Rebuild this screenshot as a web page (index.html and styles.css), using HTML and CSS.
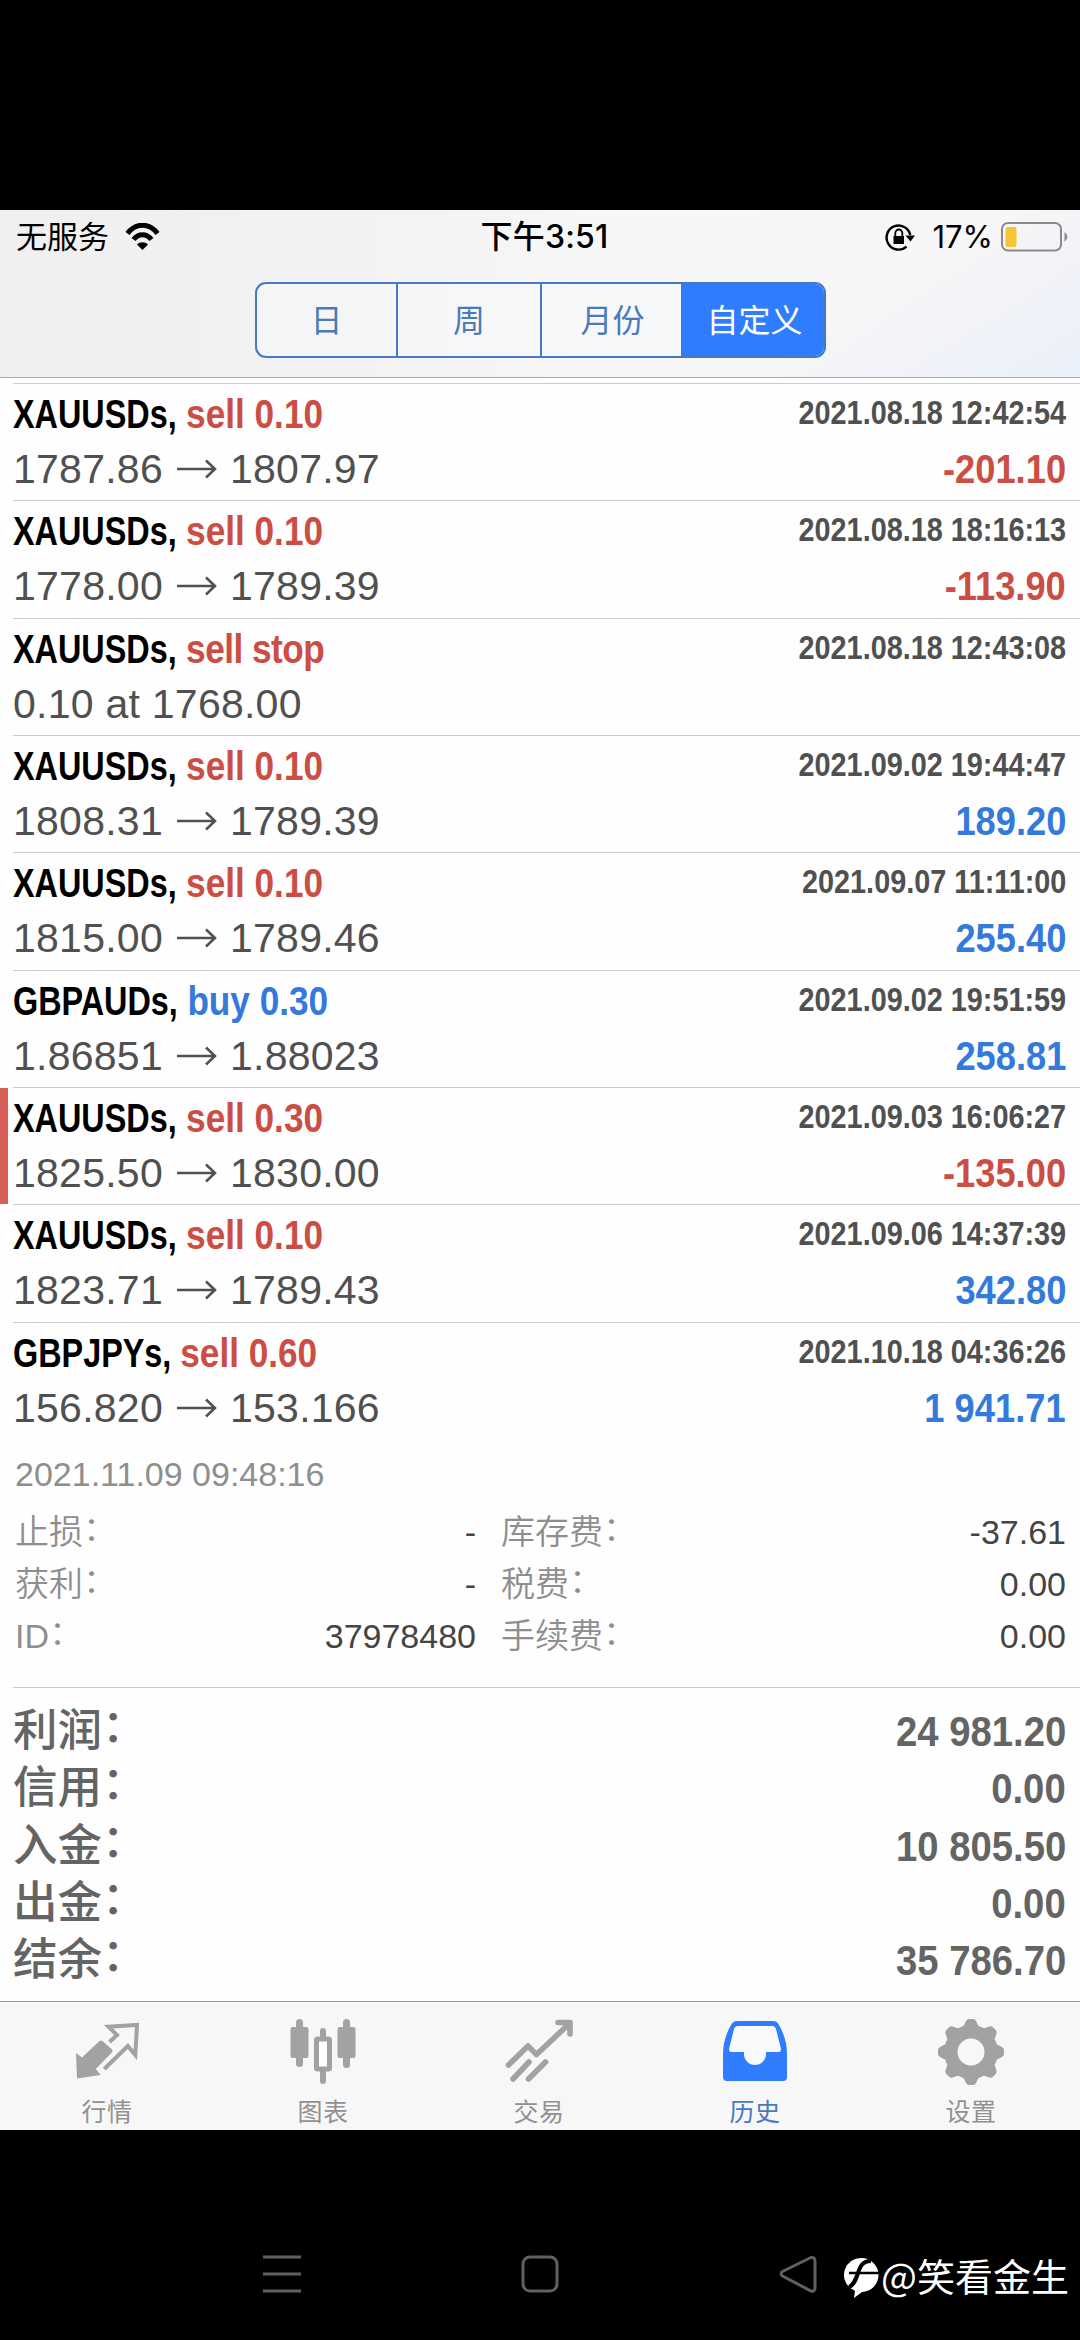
FILE: index.html
```
<!DOCTYPE html>
<html lang="zh-CN">
<head>
<meta charset="utf-8">
<title>历史</title>
<link rel="stylesheet" href="styles.css">
</head>
<body>
<div class="screen">
<header class="header">
  <div class="status">
    <div class="carrier"><span>无服务</span>
      <svg class="wifi" viewBox="0 0 36 28"><path d="M3 10.500C11-.5 25-.5 33 10.500" fill="none" stroke="#000" stroke-width="5"/><path d="M9 16.500C14 10 22 10 27 16.500" fill="none" stroke="#000" stroke-width="5"/><path d="M18 27l-5.500-5.500c3-3 8-3 11 0z"/></svg>
    </div>
    <div class="clock">下午3:51</div>
    <div class="power">
      <svg class="lock" viewBox="0 0 30 28"><path d="M21.500 23.600A12 12 0 1 1 25.300 12" fill="none" stroke="#000" stroke-width="2.400"/><path d="M20.500 12.500h9.500l-4.500 6z"/><rect x="8.500" y="13" width="10.500" height="8"/><path d="M10.300 13v-3a3.500 3.500 0 0 1 7 0v3" fill="none" stroke="#000" stroke-width="1.800"/></svg>
      <span class="percent">17%</span>
      <svg class="battery" viewBox="0 0 68 30"><rect x="1" y="1" width="59" height="27.500" rx="6" fill="none" stroke="#8b898a" stroke-width="2"/><rect x="4.500" y="5" width="11" height="20" rx="2" fill="#f5c535"/><path d="M63.500 10q6 4.500 0 10z" fill="#8b898a"/></svg>
    </div>
  </div>
  <nav class="segments"><span>日</span><span>周</span><span>月份</span><span class="on">自定义</span></nav>
</header>
<main class="list" id="list">
  <section class="deal"><div class="line"><h2><b>XAUUSDs,</b> <i class="sell">sell 0.10</i></h2><time>2021.08.18 12:42:54</time></div><div class="line"><p>1787.86<svg class="arrow" viewBox="0 0 40 20"><path d="M0 10h38M29 1.500l9 8.500-9 8.500"/></svg>1807.97</p><strong class="sell">-201.10</strong></div></section>
  <section class="deal"><div class="line"><h2><b>XAUUSDs,</b> <i class="sell">sell 0.10</i></h2><time>2021.08.18 18:16:13</time></div><div class="line"><p>1778.00<svg class="arrow" viewBox="0 0 40 20"><path d="M0 10h38M29 1.500l9 8.500-9 8.500"/></svg>1789.39</p><strong class="sell">-113.90</strong></div></section>
  <section class="deal"><div class="line"><h2><b>XAUUSDs,</b> <i class="sell stop">sell stop</i></h2><time>2021.08.18 12:43:08</time></div><div class="line"><p>0.10 at 1768.00</p></div></section>
  <section class="deal"><div class="line"><h2><b>XAUUSDs,</b> <i class="sell">sell 0.10</i></h2><time>2021.09.02 19:44:47</time></div><div class="line"><p>1808.31<svg class="arrow" viewBox="0 0 40 20"><path d="M0 10h38M29 1.500l9 8.500-9 8.500"/></svg>1789.39</p><strong class="buy">189.20</strong></div></section>
  <section class="deal"><div class="line"><h2><b>XAUUSDs,</b> <i class="sell">sell 0.10</i></h2><time>2021.09.07 11:11:00</time></div><div class="line"><p>1815.00<svg class="arrow" viewBox="0 0 40 20"><path d="M0 10h38M29 1.500l9 8.500-9 8.500"/></svg>1789.46</p><strong class="buy">255.40</strong></div></section>
  <section class="deal"><div class="line"><h2><b>GBPAUDs,</b> <i class="buy">buy 0.30</i></h2><time>2021.09.02 19:51:59</time></div><div class="line"><p>1.86851<svg class="arrow" viewBox="0 0 40 20"><path d="M0 10h38M29 1.500l9 8.500-9 8.500"/></svg>1.88023</p><strong class="buy">258.81</strong></div></section>
  <section class="deal flagged"><div class="line"><h2><b>XAUUSDs,</b> <i class="sell">sell 0.30</i></h2><time>2021.09.03 16:06:27</time></div><div class="line"><p>1825.50<svg class="arrow" viewBox="0 0 40 20"><path d="M0 10h38M29 1.500l9 8.500-9 8.500"/></svg>1830.00</p><strong class="sell">-135.00</strong></div></section>
  <section class="deal"><div class="line"><h2><b>XAUUSDs,</b> <i class="sell">sell 0.10</i></h2><time>2021.09.06 14:37:39</time></div><div class="line"><p>1823.71<svg class="arrow" viewBox="0 0 40 20"><path d="M0 10h38M29 1.500l9 8.500-9 8.500"/></svg>1789.43</p><strong class="buy">342.80</strong></div></section>
  <section class="deal"><div class="line"><h2><b>GBPJPYs,</b> <i class="sell">sell 0.60</i></h2><time>2021.10.18 04:36:26</time></div><div class="line"><p>156.820<svg class="arrow" viewBox="0 0 40 20"><path d="M0 10h38M29 1.500l9 8.500-9 8.500"/></svg>153.166</p><strong class="buy">1 941.71</strong></div></section>
  <section class="details">
    <div class="closed">2021.11.09 09:48:16</div>
    <div class="grid">
      <label>止损<i>：</i></label><span>-</span><label>库存费<i>：</i></label><span>-37.61</span>
      <label>获利<i>：</i></label><span>-</span><label>税费<i>：</i></label><span>0.00</span>
      <label>ID<i>：</i></label><span>37978480</span><label>手续费<i>：</i></label><span>0.00</span>
    </div>
  </section>
  <section class="summary">
    <div><label>利润<i>：</i></label><strong>24 981.20</strong></div>
    <div><label>信用<i>：</i></label><strong>0.00</strong></div>
    <div><label>入金<i>：</i></label><strong>10 805.50</strong></div>
    <div><label>出金<i>：</i></label><strong>0.00</strong></div>
    <div><label>结余<i>：</i></label><strong>35 786.70</strong></div>
  </section>
</main>
<footer class="tabs">
  <div><svg viewBox="0 0 72 72"><path d="M5 39l6 4.500L28.500 27q1.500-1 3 0l9.500 8.500q1 1.500 0 3L24.700 55l5 6L6 64.500z" fill="#a2a2a2"/><path d="M38.500 28l7.500-7-8.500-8.300L66 11l-1.700 30-7.500-9-23.500 23" fill="none" stroke="#a2a2a2" stroke-width="4"/></svg><span>行情</span></div>
  <div><svg viewBox="0 0 72 72"><g fill="#a2a2a2"><rect x="3.500" y="13" width="18" height="31" rx="2"/><rect x="9" y="5" width="7" height="48" rx="3.500"/><rect x="50.500" y="13" width="18" height="31" rx="2"/><rect x="56" y="5" width="7" height="49" rx="3.500"/><rect x="33" y="14" width="6" height="12" rx="3"/><rect x="33" y="54" width="6" height="16" rx="3"/></g><rect x="29.500" y="25" width="13" height="30" rx="1" fill="#fff" stroke="#a2a2a2" stroke-width="5"/></svg><span>图表</span></div>
  <div><svg viewBox="0 0 72 72"><path d="M5.500 51L25 32l8.500 8.500L67 9M55 8.500h12V20M10 65l16-17M25.500 65l17-17" fill="none" stroke="#a2a2a2" stroke-width="5.600" stroke-linecap="round" stroke-linejoin="round"/></svg><span>交易</span></div>
  <div class="active"><svg viewBox="0 0 72 72"><path d="M18 7h36q4 0 6 4 8 14 8 29v23q0 4-4 4H8q-4 0-4-4V40q0-15 8-29 2-4 6-4z" fill="#2f7cff"/><path d="M19 12h34q3 0 4 3l5 20q0 3-2 3H47v2a11 11 0 0 1-22 0v-2H12q-2 0-2-3l5-20q1-3 4-3z" fill="#f7f9fb"/></svg><span>历史</span></div>
  <div><svg viewBox="0 0 72 72"><g fill="#a2a2a2"><circle cx="36" cy="38" r="27"/><path id="cog" d="M28 13l3-6q1-2 3-2h4q2 0 3 2l3 6v50l-3 6q-1 2-3 2h-4q-2 0-3-2l-3-6z"/><use href="#cog" transform="rotate(45 36 38)"/><use href="#cog" transform="rotate(90 36 38)"/><use href="#cog" transform="rotate(135 36 38)"/></g><circle cx="36" cy="38" r="13.500" fill="#f7f7f7"/></svg><span>设置</span></div>
</footer>
</div>
<nav class="system">
  <svg viewBox="0 0 38 38"><path d="M0 2h38M0 19h38M0 36h38"/></svg>
  <svg viewBox="0 0 38 38"><rect x="2" y="2" width="34" height="34" rx="7"/></svg>
  <svg viewBox="0 0 38 38"><path d="M32 2.500L3.500 16.500q-3 2 0 4.500L32 36q4 1 4-3V6q0-4-4-3.500z"/></svg>
  <div class="credit"><svg viewBox="0 0 36 42"><path d="M18 1a17 17 0 0 0-11 30q4 2 5 3l-1 7 8-6a17 17 0 0 0-1-34z" fill="#fff"/><path d="M28 4c-9 0-11 6-13 12s-4 12-9 14" fill="none" stroke="#000" stroke-width="4"/><path d="M6 16h30" stroke="#000" stroke-width="2.500"/></svg><span>@笑看金生</span></div>
</nav>
</body>
</html>
```
FILE: styles.css
```
* { box-sizing: border-box; margin: 0; padding: 0; }
body { width: 1080px; height: 2340px; background: #000; padding-top: 210px; font-family: "Liberation Sans", "Noto Sans CJK SC", sans-serif; overflow: hidden; }
.screen { height: 1920px; background: #fefefe; display: flex; flex-direction: column; }
.header { height: 168px; flex: none; border-bottom: 1px solid #a9a9a9; background: linear-gradient(150deg, transparent 75%, #eaf0fa 100%), linear-gradient(90deg, #f0f0f1 0, #f3f1f2 28%, #f7f7f8 55%, #f6f5f7 100%); }
.status { height: 54px; padding: 0 11px 0 16px; display: grid; grid-template-columns: 1fr auto 1fr; align-items: center; font-family: Inter, "Noto Sans CJK SC", sans-serif; font-size: 31px; line-height: 54px; }
.carrier, .power { display: flex; align-items: center; }
.carrier { gap: 15px; }
.wifi { width: 37px; height: 28px; }
.clock { font-weight: 500; font-size: 32px; letter-spacing: .2px; padding-left: 4px; }
.power { justify-content: flex-end; }
.lock { width: 30px; height: 28px; margin-right: 17px; }
.percent { font-size: 31px; margin-right: 8px; }
.battery { width: 68px; height: 30px; }
.segments { width: 571px; height: 76px; margin: 18px 0 0 255px; display: grid; grid-template-columns: 139px 144px 143px 1fr; border: 2px solid #4679c4; border-radius: 11px; overflow: hidden; background: #f8fafc80; font: 32px/68px "Noto Sans CJK SC", sans-serif; color: #4a7ab8; text-align: center; }
.segments span + span { border-left: 2px solid #4679c4; }
.segments .on { background: #2f7cff; color: #fff; margin: -2px; line-height: 72px; border-color: #2f7cff; }
.list { flex: 1; padding-top: 5px; color: #505050; }
.deal { height: 117.333px; margin-left: 13px; padding: 3px 14px 0 0; border-top: 1px solid #ccc; position: relative; }
.flagged::before { content: ""; position: absolute; left: -13px; top: 0; width: 8px; height: 116px; background: #d85f58; }
.line { display: flex; justify-content: space-between; height: 55px; line-height: 55px; align-items: baseline; white-space: nowrap; }
h2 { font-size: 41px; transform: scaleX(.858); transform-origin: left; }
h2 b { display: inline-block; color: #000; transform: scaleX(.92); transform-origin: left; margin-right: -17px; }
h2 i { font-style: normal; }
h2 .stop { letter-spacing: -.6px; }
time { font-size: 33.500px; font-weight: bold; transform: scaleX(.86); transform-origin: right; line-height: 51px; align-self: flex-start; }
.line p { font-size: 41px; letter-spacing: .25px; }
.line strong { font-size: 41px; transform: scaleX(.885); transform-origin: right; }
.sell { color: #cc4d43; }
.buy { color: #3479dc; }
.arrow { width: 40px; height: 20px; margin: 0 13px 4px 14px; vertical-align: baseline; fill: none; stroke: #505050; stroke-width: 2.500; }
.details { height: 248px; padding: 9px 14px 0 15px; font-size: 34px; color: #8e8e8e; }
.closed { height: 53px; line-height: 53px; }
.grid { display: grid; grid-template-columns: 200px 261px 250px 1fr; grid-auto-rows: 52px; line-height: 52px; padding-top: 5px; }
.grid label { font-weight: 350; }
label i { font-style: normal; display: inline-block; line-height: 1; transform: translate(0, -3px); }
.grid span { color: #444; text-align: right; }
.grid label:nth-child(4n+3) { padding-left: 25px; }
.summary { margin-left: 13px; padding: 15px 14px 0 0; border-top: 1px solid #ccc; color: #646464; }
.summary div { display: flex; justify-content: space-between; height: 57.333px; line-height: 56px; }
.summary label { font-size: 44.500px; font-weight: 500; }
.summary label i { transform: translate(0, -4px); }
.summary strong { font-size: 43px; transform: scaleX(.89); transform-origin: right; }
.tabs { height: 129px; flex: none; border-top: 1px solid #999; background: #f7f7f7; display: grid; grid-template-columns: repeat(5, 216px); margin-left: -1px; width: 1081px; color: #919191; font: 25px/36px "Noto Sans CJK SC", sans-serif; letter-spacing: .5px; }
.tabs div { display: flex; flex-direction: column; align-items: center; padding-top: 12px; }
.tabs svg { width: 72px; height: 72px; margin-bottom: 6px; }
.tabs .active { color: #4679c4; }
.system { height: 210px; display: grid; grid-template-columns: 38px 38px 38px 1fr; column-gap: 220px; padding: 54px 11px 0 263px; position: relative; align-items: start; }
.system > svg { width: 38px; height: 38px; margin-top: 71px; fill: none; stroke: #606060; stroke-width: 3; }
.credit { position: absolute; right: 11px; top: 115px; height: 60px; display: flex; align-items: center; gap: 2px; color: #fff; font: 38px/60px "Noto Sans CJK SC", sans-serif; }
.credit svg { width: 36px; height: 42px; margin-top: 6px; }
```
